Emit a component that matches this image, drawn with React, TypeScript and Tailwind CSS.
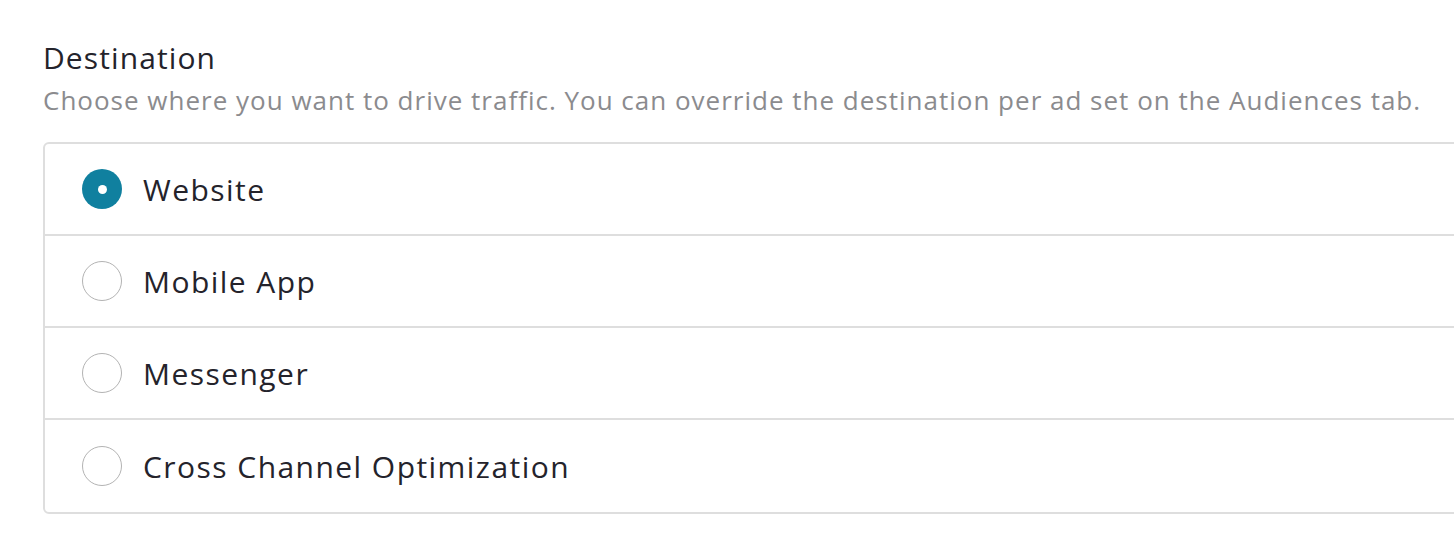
import React from "react";

const options = ["Website", "Mobile App", "Messenger", "Cross Channel Optimization"];

export default function App() {
  const [selected, setSelected] = React.useState("Website");

  return (
    <div
      className="w-screen h-[546px] overflow-hidden bg-white pl-[43px] pt-[40px]"
      style={{ fontFamily: "'Open Sans', sans-serif" }}
    >
      <h2 className="text-[30px] leading-[36px] tracking-[1.1px] text-[#24232b]">Destination</h2>
      <p className="mt-[9px] text-[26px] leading-[30px] tracking-[1px] text-[#8b8b8e]">
        Choose where you want to drive traffic. You can override the destination per ad set on the Audiences tab.
      </p>
      <div className="mt-[27px] w-[1440px] rounded-[6px] border-2 border-[#dedede]">
        {options.map((opt, i) => (
          <label
            key={opt}
            className={`flex h-[92px] cursor-pointer items-center pl-[37px] ${
              i < options.length - 1 ? "border-b-2 border-[#dedede]" : ""
            }`}
            onClick={() => setSelected(opt)}
          >
            {selected === opt ? (
              <span className="flex h-[40px] w-[40px] items-center justify-center rounded-full bg-[#10809f]">
                <span className="h-[9px] w-[9px] rounded-full bg-white" />
              </span>
            ) : (
              <span className="h-[40px] w-[40px] rounded-full border-[1.5px] border-[#b3b3b3] bg-white" />
            )}
            <span className="ml-[21px] text-[30px] tracking-[1.45px] text-[#24232b]">{opt}</span>
          </label>
        ))}
      </div>
    </div>
  );
}
